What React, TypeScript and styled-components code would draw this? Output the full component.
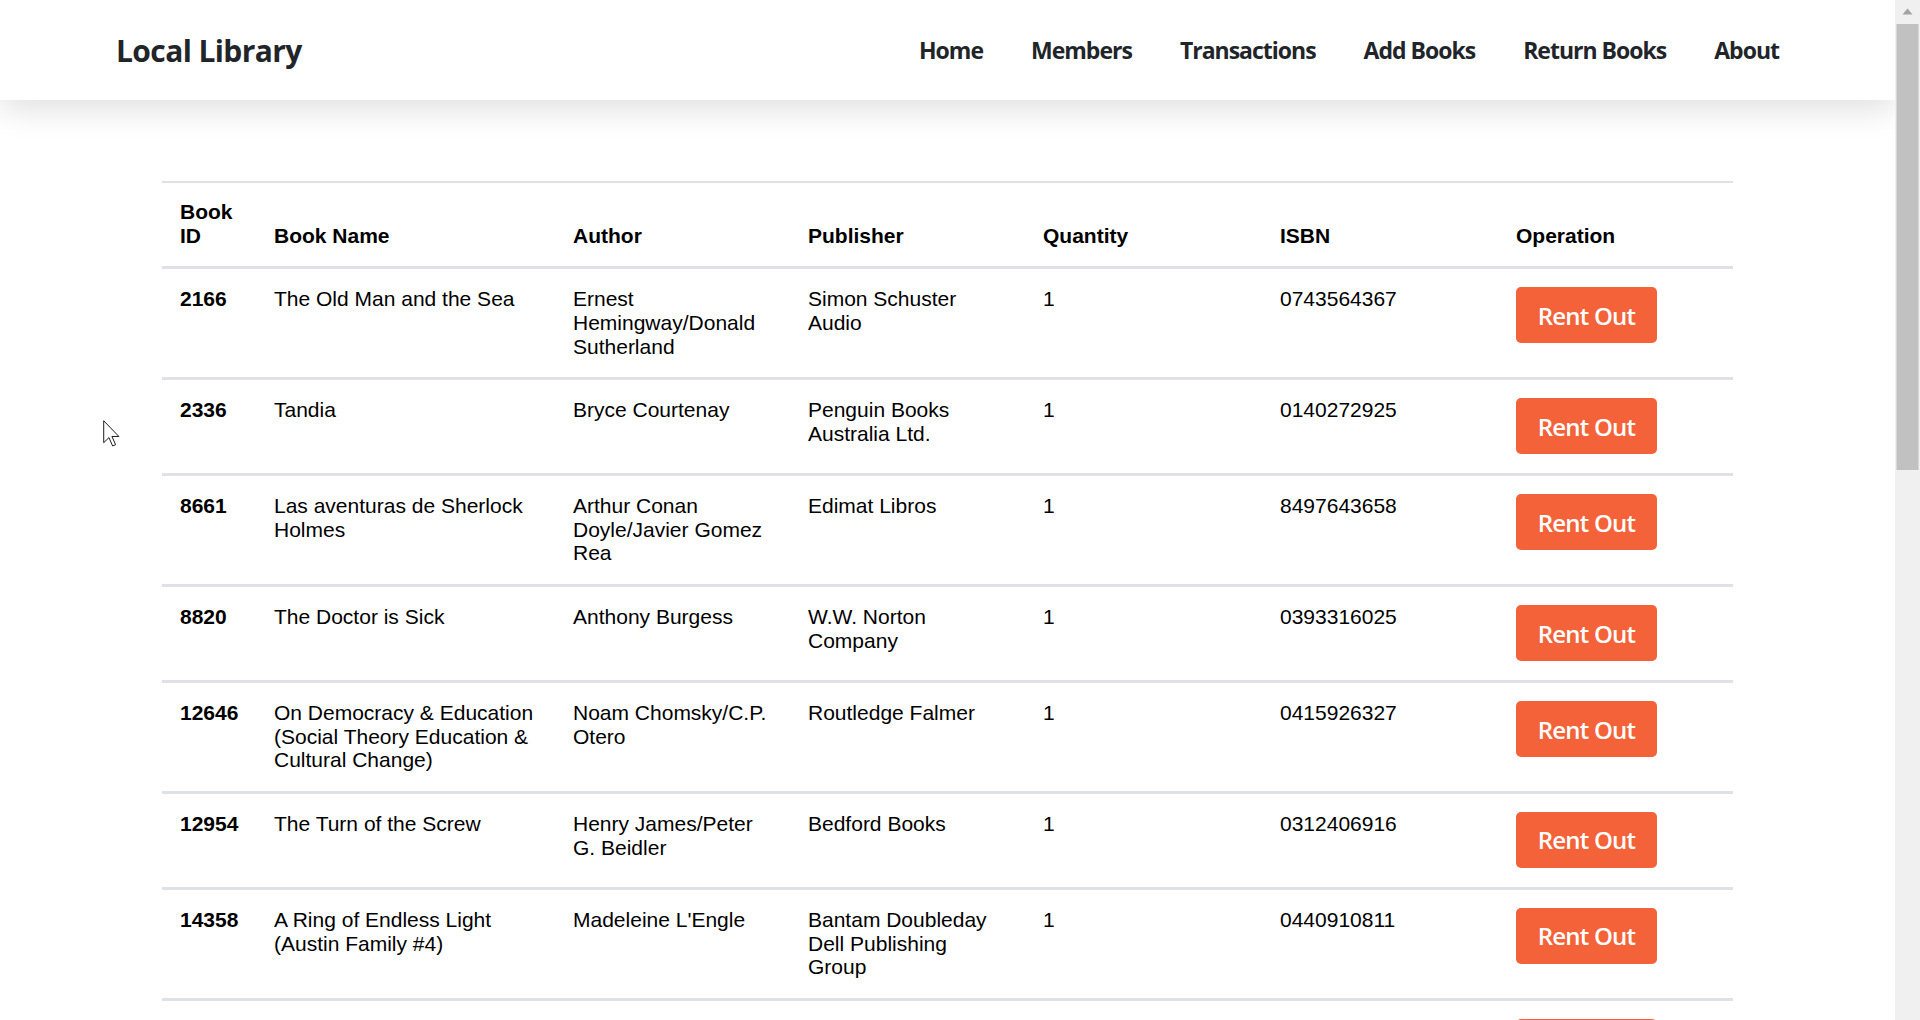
import React from "react";
import styled, { createGlobalStyle } from "styled-components";

const GlobalStyle = createGlobalStyle`
  html, body {
    margin: 0;
    padding: 0;
    background: #ffffff;
    overflow: hidden;
  }
  body {
    font-family: "Liberation Sans", Arial, sans-serif;
    color: #000;
  }
  * { box-sizing: border-box; }
`;

const Shell = styled.div`
  display: flex;
  height: 100vh;
  position: relative;
`;

const Page = styled.div`
  flex: 1;
  min-width: 0;
  height: 100vh;
  overflow: hidden;
  background: #fff;
`;

const ScrollRail = styled.div`
  width: 25px;
  flex: none;
  background: #f0f0f0;
  display: flex;
  flex-direction: column;
  align-items: center;
`;

const ScrollArrow = styled.div`
  height: 22px;
  width: 100%;
  display: flex;
  align-items: center;
  justify-content: center;
`;

const ScrollThumb = styled.div`
  margin-top: 2px;
  width: 22px;
  height: 446px;
  background: #c1c1c1;
  transform: translateX(-0.5px);
`;

const NavBar = styled.header`
  height: 100px;
  background: #fff;
  display: flex;
  align-items: center;
  justify-content: space-between;
  padding: 0 116px;
  box-shadow: 0 10px 30px rgba(0, 0, 0, 0.12);
  position: relative;
  z-index: 2;
`;

const Brand = styled.div`
  font-family: "Open Sans", "Noto Sans", sans-serif;
  font-weight: 700;
  font-size: 30px;
  letter-spacing: -0.6px;
  color: #212529;
`;

const NavLinks = styled.nav`
  display: flex;
  align-items: center;
  gap: 48px;
`;

const NavLink = styled.a`
  font-family: "Open Sans", "Noto Sans", sans-serif;
  font-weight: 700;
  font-size: 23px;
  letter-spacing: -1px;
  color: #212529;
  text-decoration: none;
`;

const Main = styled.main`
  padding: 81px 0 200px 162px;
`;

const Table = styled.table`
  width: 1571px;
  border-collapse: collapse;
  table-layout: fixed;
  border-top: 2px solid #dee2e6;
  font-size: 21px;
  line-height: 1.125;
`;

const HeadCell = styled.th`
  text-align: left;
  vertical-align: bottom;
  font-weight: 700;
  padding: 17px 18px 19px;
  border-bottom: 3px solid #dee2e6;
`;

const Row = styled.tr`
  border-bottom: 3px solid #dee2e6;
`;

const Cell = styled.td<{ $bold?: boolean }>`
  vertical-align: top;
  padding: 18px 18px 19px;
  font-weight: ${(p) => (p.$bold ? 700 : 400)};
`;

const RentButton = styled.button`
  display: block;
  width: 141px;
  height: 56px;
  border: none;
  border-radius: 5px;
  background: #f4623a;
  color: #fff;
  font-family: "Open Sans", "Noto Sans", sans-serif;
  font-weight: 600;
  font-size: 24px;
  letter-spacing: -0.8px;
  cursor: pointer;
  padding: 0;
`;

const Pointer = styled.svg`
  position: absolute;
  left: 103px;
  top: 420px;
  pointer-events: none;
`;

type Book = {
  id: string;
  name: string;
  author: string;
  publisher: string;
  qty: string;
  isbn: string;
};

const books: Book[] = [
  { id: "2166", name: "The Old Man and the Sea", author: "Ernest Hemingway/Donald Sutherland", publisher: "Simon Schuster Audio", qty: "1", isbn: "0743564367" },
  { id: "2336", name: "Tandia", author: "Bryce Courtenay", publisher: "Penguin Books Australia Ltd.", qty: "1", isbn: "0140272925" },
  { id: "8661", name: "Las aventuras de Sherlock Holmes", author: "Arthur Conan Doyle/Javier Gomez Rea", publisher: "Edimat Libros", qty: "1", isbn: "8497643658" },
  { id: "8820", name: "The Doctor is Sick", author: "Anthony Burgess", publisher: "W.W. Norton Company", qty: "1", isbn: "0393316025" },
  { id: "12646", name: "On Democracy & Education (Social Theory Education & Cultural Change)", author: "Noam Chomsky/C.P. Otero", publisher: "Routledge Falmer", qty: "1", isbn: "0415926327" },
  { id: "12954", name: "The Turn of the Screw", author: "Henry James/Peter G. Beidler", publisher: "Bedford Books", qty: "1", isbn: "0312406916" },
  { id: "14358", name: "A Ring of Endless Light (Austin Family #4)", author: "Madeleine L'Engle", publisher: "Bantam Doubleday Dell Publishing Group", qty: "1", isbn: "0440910811" },
  { id: "15023", name: "The Hobbit", author: "J.R.R. Tolkien", publisher: "Houghton Mifflin", qty: "1", isbn: "0618260307" },
  { id: "16711", name: "Pride and Prejudice", author: "Jane Austen", publisher: "Penguin Classics", qty: "1", isbn: "0141439513" },
];

const colWidths = [94, 299, 235, 235, 237, 236, 235];
const headers = ["Book ID", "Book Name", "Author", "Publisher", "Quantity", "ISBN", "Operation"];

export default function App() {
  return (
    <>
      <GlobalStyle />
      <Shell>
        <Page>
          <NavBar>
            <Brand>Local Library</Brand>
            <NavLinks>
              {["Home", "Members", "Transactions", "Add Books", "Return Books", "About"].map((l) => (
                <NavLink key={l} href="#">
                  {l}
                </NavLink>
              ))}
            </NavLinks>
          </NavBar>
          <Main>
            <Table>
              <colgroup>
                {colWidths.map((w, i) => (
                  <col key={i} style={{ width: w }} />
                ))}
              </colgroup>
              <thead>
                <tr>
                  {headers.map((h) => (
                    <HeadCell key={h}>{h}</HeadCell>
                  ))}
                </tr>
              </thead>
              <tbody>
                {books.map((b) => (
                  <Row key={b.id}>
                    <Cell $bold>{b.id}</Cell>
                    <Cell>{b.name}</Cell>
                    <Cell>{b.author}</Cell>
                    <Cell>{b.publisher}</Cell>
                    <Cell>{b.qty}</Cell>
                    <Cell>{b.isbn}</Cell>
                    <Cell>
                      <RentButton>Rent Out</RentButton>
                    </Cell>
                  </Row>
                ))}
              </tbody>
            </Table>
          </Main>
        </Page>
        <ScrollRail>
          <ScrollArrow>
            <svg width="11" height="7" viewBox="0 0 11 7">
              <polygon points="5.5,0.5 10.5,6.5 0.5,6.5" fill="#a3a3a3" />
            </svg>
          </ScrollArrow>
          <ScrollThumb />
        </ScrollRail>
        <Pointer width="17" height="27" viewBox="0 0 12 19">
          <polygon
            points="0.5,0.5 0.5,16 4.2,12.4 6.8,18.3 8.9,17.4 6.3,11.6 11.2,11.6"
            fill="#fff"
            stroke="#1a1a1a"
            strokeWidth="0.7"
            strokeLinejoin="round"
          />
        </Pointer>
      </Shell>
    </>
  );
}
